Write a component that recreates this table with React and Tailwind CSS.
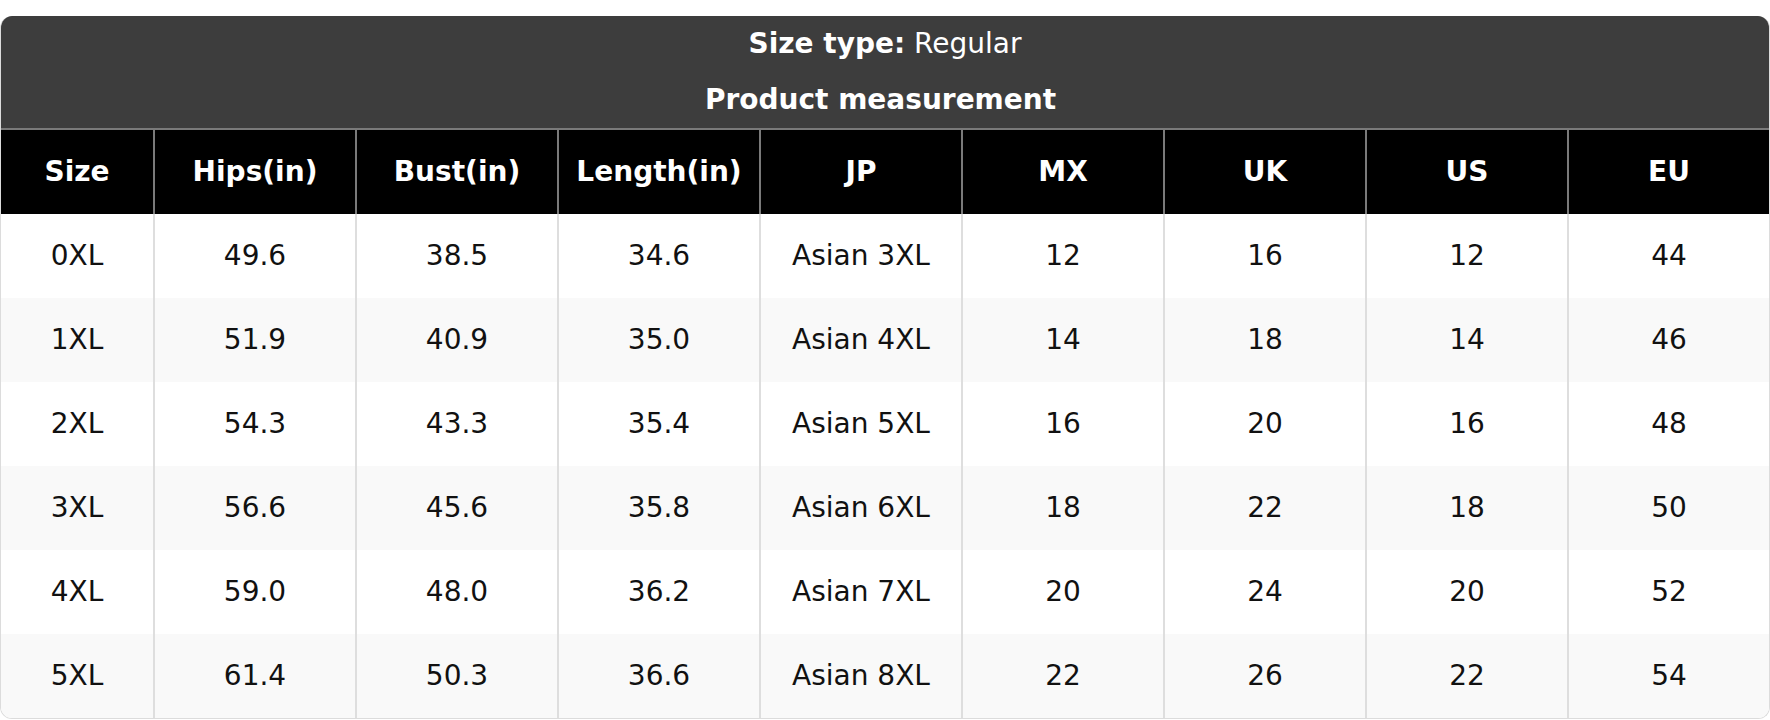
import React from "react";

const headers = ["Size", "Hips(in)", "Bust(in)", "Length(in)", "JP", "MX", "UK", "US", "EU"];
const rows = [
  ["0XL", "49.6", "38.5", "34.6", "Asian 3XL", "12", "16", "12", "44"],
  ["1XL", "51.9", "40.9", "35.0", "Asian 4XL", "14", "18", "14", "46"],
  ["2XL", "54.3", "43.3", "35.4", "Asian 5XL", "16", "20", "16", "48"],
  ["3XL", "56.6", "45.6", "35.8", "Asian 6XL", "18", "22", "18", "50"],
  ["4XL", "59.0", "48.0", "36.2", "Asian 7XL", "20", "24", "20", "52"],
  ["5XL", "61.4", "50.3", "36.6", "Asian 8XL", "22", "26", "22", "54"],
];

export default function App() {
  return (
    <div
      className="w-[1770px] h-[720px] bg-white pt-[16px] overflow-hidden"
      style={{ fontFamily: '"DejaVu Sans", Verdana, sans-serif' }}
    >
      <div className="rounded-xl overflow-hidden border-x border-b border-[#dcdcdc] text-[28px]">
        <div className="bg-[#3d3d3d] text-white text-center">
          <div className="py-[7px] leading-[42px]">
            <span className="font-bold">Size type:</span> Regular
          </div>
          <div className="py-[7px] pr-[9px] leading-[42px] font-bold">Product measurement</div>
        </div>
        <div className="grid grid-cols-[152px_repeat(8,1fr)] bg-black text-white font-bold border-t-2 border-[#7a7a7a]">
          {headers.map((h, i) => (
            <div
              key={h}
              className={`h-[84px] flex items-center justify-center ${i > 0 ? "border-l-2 border-[#7a7a7a]" : ""}`}
            >
              {h}
            </div>
          ))}
        </div>
        {rows.map((r, ri) => (
          <div
            key={ri}
            className={`grid grid-cols-[152px_repeat(8,1fr)] text-[#111] ${ri % 2 === 1 ? "bg-[#f9f9f9]" : "bg-white"}`}
          >
            {r.map((c, ci) => (
              <div
                key={ci}
                className={`h-[84px] flex items-center justify-center ${ci > 0 ? "border-l-2 border-[#dedede]" : ""}`}
              >
                {c}
              </div>
            ))}
          </div>
        ))}
      </div>
    </div>
  );
}
